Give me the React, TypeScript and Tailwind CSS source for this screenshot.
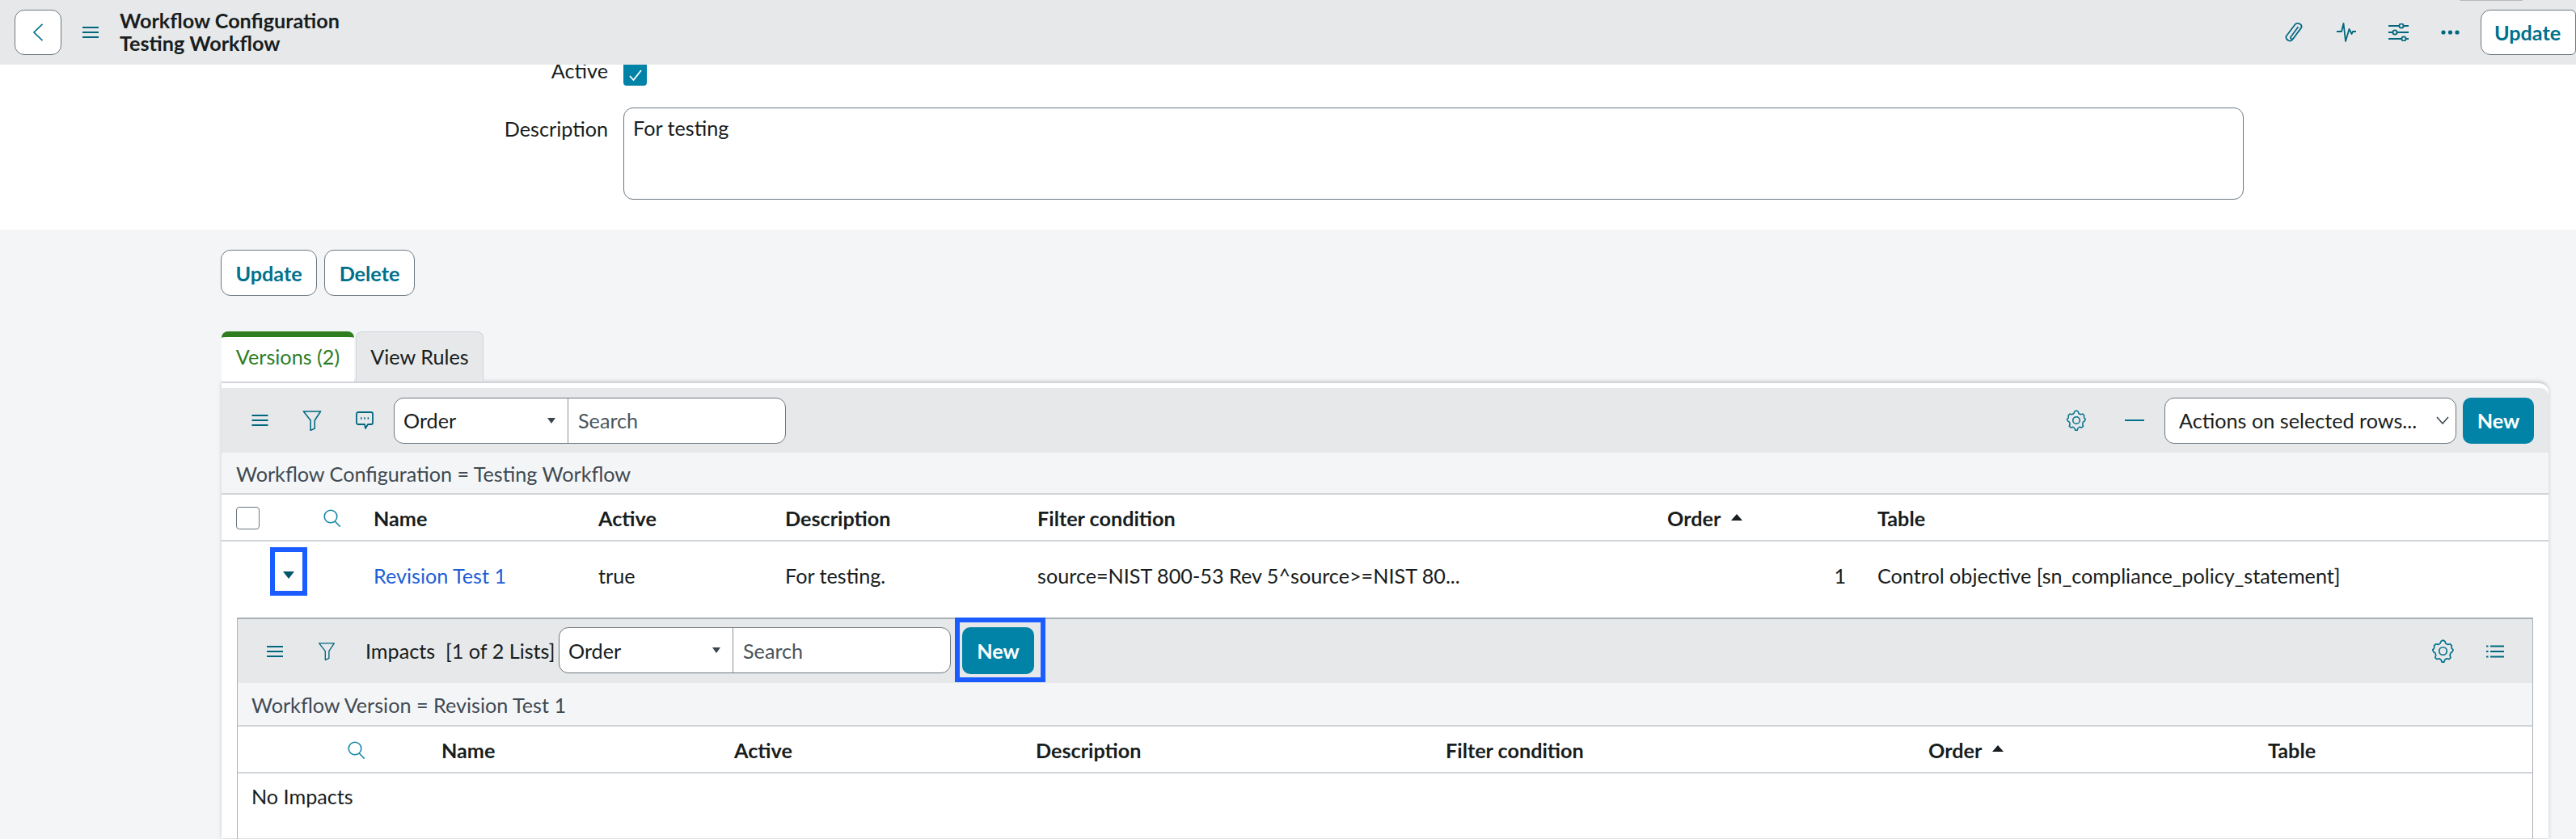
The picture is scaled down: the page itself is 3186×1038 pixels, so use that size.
import type { ReactNode } from "react";

const iconClass = "fill-none stroke-[#00677f]";

function Hamburger({ className }: { className: string }) {
    return (
        <svg viewBox="0 0 20 14" className={`${iconClass} ${className}`} strokeWidth="2">
            <path d="M0 1h20M0 7h20M0 13h20" />
        </svg>
    );
}

function Funnel({ className }: { className: string }) {
    return (
        <svg viewBox="0 0 24 26" className={`${iconClass} ${className}`} strokeWidth="1.6" strokeLinejoin="round">
            <path d="M1 1h22l-7.6 11.5V23l-5.4 2.4V12.5z" />
        </svg>
    );
}

function Gear({ className }: { className: string }) {
    return (
        <svg viewBox="0 0 28 28" className={`fill-none stroke-[#00708c] ${className}`} strokeWidth="1.6" strokeLinejoin="round">
            <path d="M11.6 2.4 14 1l2.4 1.4.9 2.7 2.6 1.1 2.6-.7 1.9 2.1-.2 2.8 1.9 2-1 2.6-2.2 1.5-.6 2.8.9 2.6-2.2 1.8-2.7-.8-2.2 1.6-.7 2.6h-2.8l-.9-2.6-2.2-1.6-2.7.8-2.2-1.8.9-2.6-.6-2.8-2.2-1.5-1-2.6 1.9-2-.2-2.8 1.9-2.1 2.6.7 2.6-1.1z" />
            <circle cx="14" cy="14" r="4.6" />
        </svg>
    );
}

function SearchIcon({ className }: { className: string }) {
    return (
        <svg viewBox="0 0 22 22" className={`fill-none stroke-[#1488a8] ${className}`} strokeWidth="1.6">
            <circle cx="9" cy="9" r="7.8" />
            <path d="M14.2 15l6.6 6.6" />
        </svg>
    );
}

function OrderSearch() {
    return (
        <div className="flex h-[57px] w-[485px] shrink-0 overflow-hidden rounded-[12px] border border-[#6d7880] bg-white">
            <div className="flex w-[215px] items-center justify-between border-r border-[#8b949b] pl-[11px] pr-[15px] text-[#181d20]">
                <span>Order</span>
                <span className="h-0 w-0 border-x-[5px] border-t-[7px] border-x-transparent border-t-[#3a454c]" />
            </div>
            <div className="flex items-center pl-[12px] text-[#4a555c]">Search</div>
        </div>
    );
}

function ColumnHead({ children, sorted }: { children: ReactNode; sorted?: boolean }) {
    return (
        <div className="flex items-center gap-[13px] font-bold text-[#181d20]">
            {children}
            {sorted && <span className="-mt-[3px] h-0 w-0 border-x-[7px] border-b-[8px] border-x-transparent border-b-[#181d20]" />}
        </div>
    );
}

function OutlineButton({ label, className }: { label: string; className: string }) {
    return (
        <button className={`h-[57px] rounded-[12px] border border-[#6d7880] bg-white font-bold text-[#00708c] ${className}`}>
            {label}
        </button>
    );
}

export default function App() {
    return (
        <div
            className="h-[1038px] w-[3186px] overflow-hidden bg-[#f4f5f7] text-[25.2px] leading-[28px] text-[#181d20]"
            style={{ fontFamily: "Lato, 'Open Sans', sans-serif" }}
        >
            {/* sticky form header */}
            <header className="relative flex h-[80px] items-center bg-[#e6e8ea] pl-[18px]">
                <div className="absolute left-[3042px] top-0 h-px w-[78px] rounded-b-full bg-[#b5babe]" />
                <button className="flex h-[56px] w-[58px] items-center justify-center rounded-[12px] border border-[#6d7880] bg-white">
                    <svg viewBox="0 0 14 24" className="h-[22px] w-[14px] fill-none stroke-[#00708c]" strokeWidth="1.8">
                        <path d="M13 1 1.5 12 13 23" />
                    </svg>
                </button>
                <Hamburger className="ml-[26px] h-[14px] w-[20px]" />
                <div className="-mt-[2px] ml-[26px] font-bold text-[#181d20]">
                    <div>Workflow Configuration</div>
                    <div>Testing Workflow</div>
                </div>
                <div className="ml-auto flex items-center">
                    <svg viewBox="0 0 24 26" className={`h-[26px] w-[24px] ${iconClass}`} strokeWidth="1.7" strokeLinecap="round">
                        <path d="M20.5 8.5 9.8 22.6c-1.8 2.4-8 .2-7.4-4.5L13.6 3.2c2.2-2.9 8.6-.6 8 3.4L11.4 20.8c-1.2 1.4-4 .2-3.4-1.7l9-12.4" />
                    </svg>
                    <svg viewBox="0 0 24 24" className={`ml-[41px] h-[24px] w-[24px] ${iconClass}`} strokeWidth="1.8" strokeLinejoin="round">
                        <path d="M0 11h6l2.5-10L11 23l4.5-15 3 6 1.5-3H24" />
                    </svg>
                    <svg viewBox="0 0 25 22" className={`ml-[40px] h-[22px] w-[25px] ${iconClass}`} strokeWidth="1.8">
                        <path d="M0 3h13M19 3h6M0 11h5M11 11h14M0 19h16M22 19h3" />
                        <circle cx="16" cy="3" r="2.6" />
                        <circle cx="8" cy="11" r="2.6" />
                        <circle cx="19" cy="19" r="2.6" />
                    </svg>
                    <svg viewBox="0 0 23 6" className="ml-[40px] h-[6px] w-[23px] fill-[#00677f]">
                        <circle cx="3" cy="3" r="2.6" />
                        <circle cx="11.5" cy="3" r="2.6" />
                        <circle cx="20" cy="3" r="2.6" />
                    </svg>
                    <button className="ml-[26px] h-[56px] w-[118px] rounded-l-[12px] rounded-r-[6px] border border-[#6d7880] bg-white pr-[2px] font-bold text-[#00708c]">
                        Update
                    </button>
                </div>
            </header>

            {/* form fields */}
            <section className="h-[204px] bg-white">
                <div className="grid grid-cols-[752px_1fr] gap-x-[19px]">
                    <div className="h-[26px] text-right leading-[15px]">Active</div>
                    <div className="flex h-[26px] w-[29px] items-center justify-center rounded-b-[4px] bg-[#0083a7]">
                        <svg viewBox="0 0 16 14" className="h-[14px] w-[16px] fill-none stroke-white" strokeWidth="1.8">
                            <path d="M1 8l4.5 5L15 1" />
                        </svg>
                    </div>
                    <div className="mt-[27px] pt-[12px] text-right">Description</div>
                    <div className="mt-[27px] h-[114px] w-[2004px] rounded-[12px] border border-[#6d7880] bg-white px-[11px] py-[10px]">
                        For testing
                    </div>
                </div>
            </section>

            <div className="flex gap-[9px] pl-[273px] pt-[25px]">
                <OutlineButton label="Update" className="w-[119px]" />
                <OutlineButton label="Delete" className="w-[112px]" />
            </div>

            {/* related lists */}
            <div className="ml-[274px] mt-[44px] w-[2878px]">
                <div className="flex h-[62px] items-stretch gap-[2px]">
                    <div className="flex w-[164px] items-center justify-center rounded-t-[8px] border-t-[7px] border-[#2e7d1f] bg-white pb-[8px] text-[#2e7d1f]">
                        Versions (2)
                    </div>
                    <div className="flex w-[158px] items-center justify-center rounded-t-[8px] border border-b-0 border-[#d0d4d8] bg-[#e6e8ea] pb-[2px]">
                        View Rules
                    </div>
                </div>

                <div className="h-[565px] rounded-tr-[12px] border-t-2 border-[#d0d4d8] bg-white pt-[6px] shadow-[0_0_5px_rgba(0,0,0,0.18)]">
                    <div className="flex h-[80px] items-center rounded-tr-[10px] bg-[#e6e8ea] pl-[37px] pr-[18px]">
                        <Hamburger className="h-[14px] w-[21px]" />
                        <Funnel className="ml-[42px] h-[25px] w-[24px]" />
                        <svg viewBox="0 0 22 22" className={`ml-[42px] h-[22px] w-[22px] ${iconClass}`} strokeWidth="1.8" strokeLinejoin="round">
                            <path d="M3 1h16a2 2 0 0 1 2 2v11a2 2 0 0 1-2 2h-4l-3 5-1-5H3a2 2 0 0 1-2-2V3a2 2 0 0 1 2-2z" />
                            <path d="M6 8.5h1.5M10.3 8.5h1.5M14.6 8.5h1.5" strokeWidth="2.4" />
                        </svg>
                        <div className="ml-[25px]">
                            <OrderSearch />
                        </div>
                        <Gear className="ml-auto h-[26px] w-[26px]" />
                        <div className="ml-[47px] h-[2px] w-[24px] bg-[#00708c]" />
                        <div className="ml-[25px] flex h-[57px] w-[361px] items-center justify-between rounded-[12px] border border-[#6d7880] bg-white pl-[17px] pr-[8px]">
                            <span>Actions on selected rows...</span>
                            <svg viewBox="0 0 16 10" className="h-[10px] w-[16px] fill-none stroke-[#3a454c]" strokeWidth="1.5">
                                <path d="M1 1l7 8 7-8" />
                            </svg>
                        </div>
                        <button className="ml-[8px] h-[57px] w-[88px] rounded-[10px] bg-[#0083a7] font-bold text-white">New</button>
                    </div>

                    <div className="flex h-[52px] items-center border-b-2 border-[#d0d5d9] bg-[#f4f5f7] pl-[18px] pt-[2px] text-[#3f4a52]">
                        Workflow Configuration = Testing Workflow
                    </div>

                    <div className="grid h-[58px] grid-cols-[188px_278px_231px_312px_779px_260px_1fr] items-center border-b-2 border-[#d0d5d9] pt-[2px]">
                        <div className="flex items-center pl-[18px]">
                            <span className="h-[28px] w-[29px] rounded-[4px] border border-[#6d7880]" />
                            <SearchIcon className="ml-[79px] h-[22px] w-[22px]" />
                        </div>
                        <ColumnHead>Name</ColumnHead>
                        <ColumnHead>Active</ColumnHead>
                        <ColumnHead>Description</ColumnHead>
                        <ColumnHead>Filter condition</ColumnHead>
                        <ColumnHead sorted>Order</ColumnHead>
                        <ColumnHead>Table</ColumnHead>
                    </div>

                    <div className="relative grid h-[94px] grid-cols-[188px_278px_231px_312px_779px_260px_1fr] items-center pb-[10px]">
                        <div />
                        <div className="text-[#1f5fd6]">Revision Test 1</div>
                        <div>true</div>
                        <div>For testing.</div>
                        <div>source=NIST 800-53 Rev 5^source&gt;=NIST 80...</div>
                        <div className="pr-[39px] text-right">1</div>
                        <div className="whitespace-nowrap">Control objective [sn_compliance_policy_statement]</div>
                        <div className="absolute left-[60px] top-[7px] flex h-[60px] w-[46px] items-center justify-center border-[6px] border-[#1a5cff] pt-[8px]">
                            <span className="h-0 w-0 border-x-[7px] border-t-[9px] border-x-transparent border-t-[#00566b]" />
                        </div>
                    </div>

                    {/* embedded list */}
                    <div className="mx-[19px] h-[280px] border-x border-t-2 border-[#aab1b6]">
                        <div className="flex h-[79px] items-center bg-[#e6e8ea] pl-[36px] pr-[35px]">
                            <Hamburger className="h-[14px] w-[20px]" />
                            <Funnel className="ml-[43px] h-[22px] w-[22px]" />
                            <span className="-mt-[2px] ml-[37px] w-[239px] whitespace-pre">Impacts  [1 of 2 Lists]</span>
                            <div className="-mt-[2px]">
                                <OrderSearch />
                            </div>
                            <button className="relative -mt-[2px] ml-[14px] h-[58px] w-[89px] rounded-[10px] bg-[#0083a7] font-bold text-white">
                                New
                                <span className="absolute -bottom-[10px] -left-[9px] -right-[14px] -top-[12px] border-[6px] border-[#1a5cff]" />
                            </button>
                            <Gear className="ml-auto h-[29px] w-[29px]" />
                            <svg viewBox="0 0 22 16" className={`ml-[39px] h-[16px] w-[22px] ${iconClass}`} strokeWidth="1.8">
                                <path d="M5 1.5h17M5 8h17M5 14.5h17M0 1.5h2.5M0 8h2.5M0 14.5h2.5" />
                            </svg>
                        </div>
                        <div className="flex h-[54px] items-center border-b-2 border-[#d0d5d9] bg-[#f4f5f7] pl-[17px] pt-[1px] text-[#3f4a52]">
                            Workflow Version = Revision Test 1
                        </div>
                        <div className="grid h-[58px] grid-cols-[252px_362px_373px_507px_597px_420px_1fr] items-center border-b-2 border-[#d0d5d9] pt-[1px]">
                            <div className="pl-[136px]">
                                <SearchIcon className="h-[22px] w-[22px]" />
                            </div>
                            <ColumnHead>Name</ColumnHead>
                            <ColumnHead>Active</ColumnHead>
                            <ColumnHead>Description</ColumnHead>
                            <ColumnHead>Filter condition</ColumnHead>
                            <ColumnHead sorted>Order</ColumnHead>
                            <ColumnHead>Table</ColumnHead>
                        </div>
                        <div className="pl-[17px] pt-[14px]">No Impacts</div>
                    </div>
                </div>
            </div>
        </div>
    );
}
